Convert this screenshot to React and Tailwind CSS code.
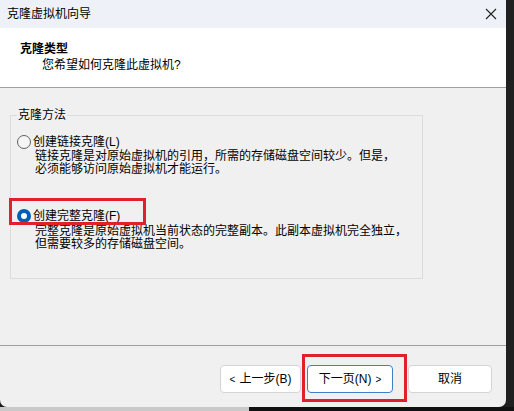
import React from "react";

const Radio = ({ checked }) =>
  checked ? (
    <span className="w-[14px] h-[14px] rounded-full bg-[#005fb8] flex items-center justify-center shrink-0">
      <span className="w-[6px] h-[6px] rounded-full bg-white" />
    </span>
  ) : (
    <span className="w-[14px] h-[14px] rounded-full border border-[#5f5f5f] bg-[#f5f5f5] shrink-0" />
  );

const App = () => {
  return (
    <div className="w-[514px] h-[411px] flex flex-col bg-[#1c1c1c] overflow-hidden text-[12px] text-black font-['Liberation_Sans','Noto_Sans_CJK_SC',sans-serif]">
      <div className="flex">
        <div className="w-[506px] h-[407px] flex flex-col bg-[#f0f0f0] rounded-b-[7px] overflow-hidden">
          {/* Title bar */}
          <div className="h-[28px] bg-[#eef2f8] flex items-center justify-between pl-[7px] pr-[9px]">
            <span className="leading-[16px]">克隆虚拟机向导</span>
            <svg width="12" height="12" viewBox="0 0 12 12">
              <path d="M1 1 L11 11 M11 1 L1 11" stroke="#222" strokeWidth="1.1" />
            </svg>
          </div>

          {/* Header */}
          <div className="h-[60px] bg-white border-b border-[#a0a0a0] pt-[13px] pl-[20px]">
            <div className="font-bold leading-[16px]">克隆类型</div>
            <div className="leading-[16px] pl-[22px]">您希望如何克隆此虚拟机?</div>
          </div>

          {/* Body */}
          <div className="h-[258px] border-b border-[#a0a0a0] pt-[19px] pl-[10px]">
            <fieldset className="w-[413px] h-[172px] border border-[#dcdcdc]">
              <legend className="ml-[6px] px-[1px] leading-[16px]">克隆方法</legend>

              <div className="mt-[11px] pl-[6px] flex items-center gap-[2px] h-[16px]">
                <Radio checked={false} />
                <span className="leading-[16px]">创建链接克隆(L)</span>
              </div>
              <div className="pl-[24px] leading-[13px]">
                <div>链接克隆是对原始虚拟机的引用，所需的存储磁盘空间较少。但是，</div>
                <div>必须能够访问原始虚拟机才能运行。</div>
              </div>

              <div className="relative mt-[32px]">
                <div className="pl-[6px] flex items-center gap-[2px] h-[16px]">
                  <Radio checked={true} />
                  <span className="leading-[16px]">创建完整克隆(F)</span>
                </div>
                <div className="mt-[1px] pl-[24px] leading-[13px]">
                  <div>完整克隆是原始虚拟机当前状态的完整副本。此副本虚拟机完全独立，</div>
                  <div>但需要较多的存储磁盘空间。</div>
                </div>
                <div className="absolute -left-[2px] -top-[10px] w-[137px] h-[27px] border-[3px] border-[#e0202a]" />
              </div>
            </fieldset>
          </div>

          {/* Footer */}
          <div className="flex-1 flex justify-end items-start pt-[19px] pr-[14px]">
            <button className="w-[81px] h-[28px] bg-white border border-[#d4d4d4] rounded-[4px] flex items-center justify-center gap-[4px]">
              <span className="text-[10px]">&lt;</span>
              <span>上一步(B)</span>
            </button>
            <div className="relative ml-[6px]">
              <button className="w-[86px] h-[28px] bg-white border border-[#3f7fc6] rounded-[4px] flex items-center justify-center gap-[4px]">
                <span>下一页(N)</span>
                <span className="text-[10px]">&gt;</span>
              </button>
              <div className="absolute -left-[5px] -top-[11px] w-[105px] h-[48px] border-[3px] border-[#e0202a]" />
            </div>
            <button className="ml-[15px] w-[84px] h-[28px] bg-white border border-[#d4d4d4] rounded-[4px] flex items-center justify-center">
              取消
            </button>
          </div>
        </div>
        <div className="flex-1 bg-[#202020]" />
      </div>
      <div className="flex h-[4px]">
        <div className="w-[249px] bg-[#c9c9c9]" />
        <div className="flex-1 bg-[#111111]" />
      </div>
    </div>
  );
};

export default App;
